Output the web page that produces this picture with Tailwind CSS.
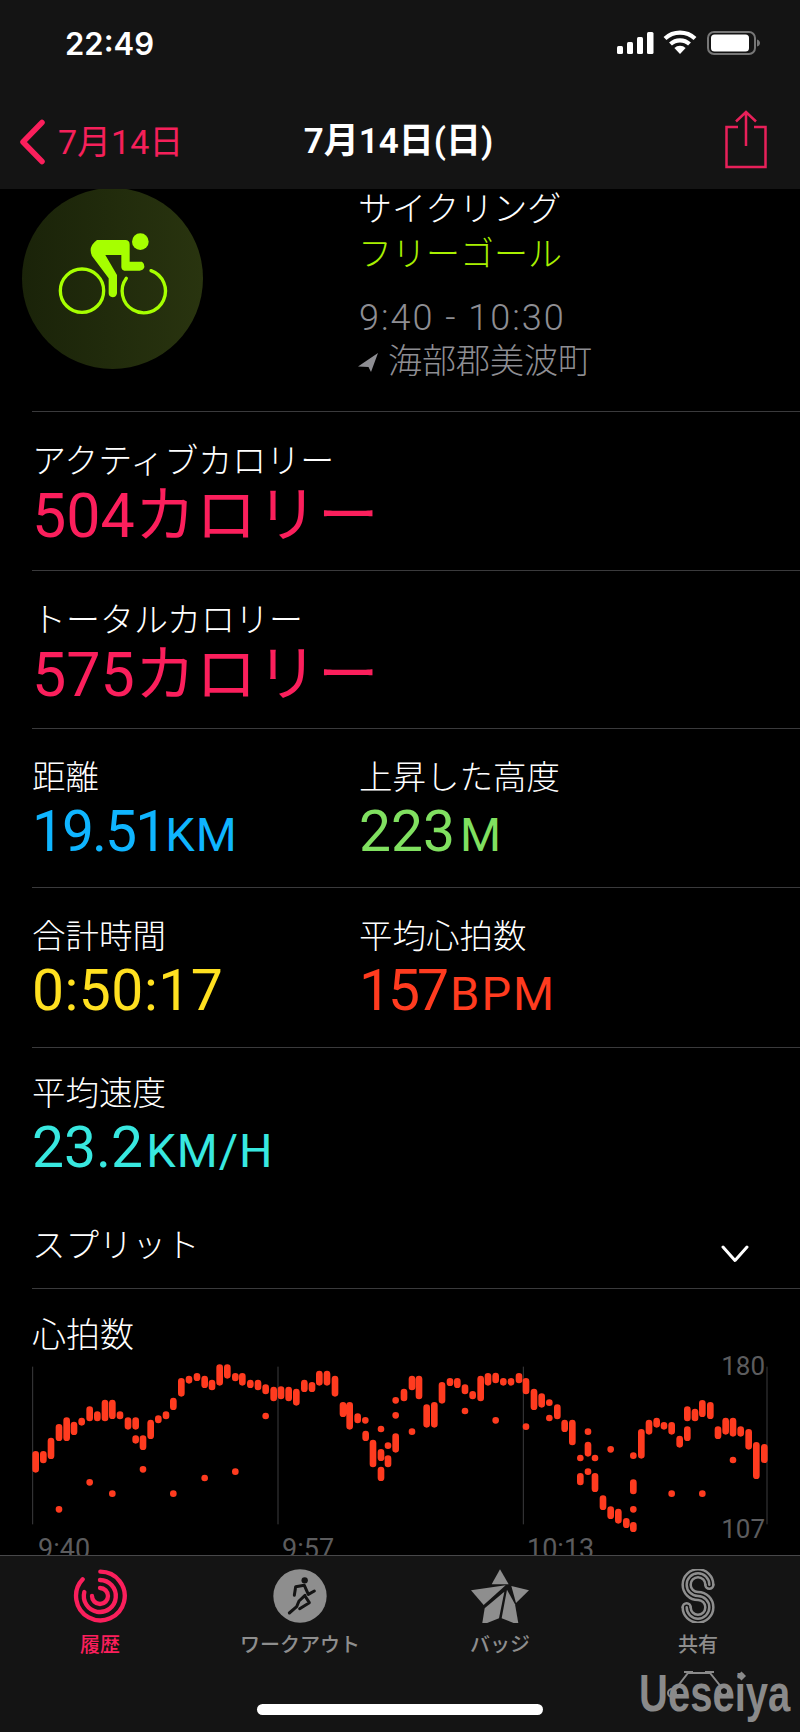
<!DOCTYPE html>
<html lang="ja">
<head>
<meta charset="utf-8">
<script src="https://cdn.jsdelivr.net/npm/@tailwindcss/browser@4"></script>
</head>
<body class="bg-black">
<div class="relative w-[800px] h-[1732px] overflow-hidden flex flex-col bg-black text-white font-['Roboto','Noto_Sans_CJK_JP',sans-serif]">

  <header class="h-[189px] shrink-0 bg-[#141414] flex flex-col">
    <div class="h-[86px] flex items-center justify-between pl-[65px] pr-[40px]">
      <span class="font-['Inter'] font-semibold text-[31px] leading-none">22:49</span>
      <div class="flex items-center">
        <svg width="146" height="30" viewBox="614 28 146 30" fill="none">
          <rect x="617" y="46" width="6" height="8" rx="1.5" fill="#fff"/>
          <rect x="627" y="42" width="6" height="12" rx="1.5" fill="#fff"/>
          <rect x="637" y="37" width="6" height="17" rx="1.5" fill="#fff"/>
          <rect x="647" y="32" width="6.5" height="22" rx="1.5" fill="#fff"/>
          <path d="M665 38.5a22 22 0 0 1 30 0" stroke="#fff" stroke-width="4.2"/>
          <path d="M670.5 44a14 14 0 0 1 19 0" stroke="#fff" stroke-width="4.2"/>
          <path d="M680 54l-5.6-6a8 8 0 0 1 11.2 0z" fill="#fff"/>
          <rect x="708" y="32" width="47" height="22" rx="6" stroke="#777" stroke-width="2"/>
          <rect x="711" y="34.5" width="38" height="17" rx="3.5" fill="#fff"/>
          <path d="M757 39.5c2 .5 3 2 3 3.5s-1 3-3 3.500z" fill="#777"/>
        </svg>
      </div>
    </div>
    <nav class="flex-1 grid grid-cols-[200px_1fr_200px] items-center pt-[8px]">
      <div class="flex items-center pl-[19px] text-[#f5205a]">
        <svg width="28" height="46" viewBox="0 0 28 46" fill="none"><path d="M23 3.500 L4 23 L23 42.500" stroke="#fb1f5c" stroke-width="5.500" stroke-linecap="round" stroke-linejoin="round"/></svg>
        <span class="ml-[11px] text-[34px] leading-none">7月14日</span>
      </div>
      <div class="text-center text-[35px] leading-none font-semibold -ml-[3px]">7月14日(日)</div>
      <div class="flex justify-end pr-[33px] -mt-[3px]">
        <svg width="42" height="60" viewBox="0 0 42 60" fill="none" stroke="#e8205a" stroke-width="2.500">
          <path d="M13 17H1.500V57H40.500V17H29"/>
          <path d="M21 2V36M11 11.500L21 2L31 11.500"/>
        </svg>
      </div>
    </nav>
  </header>

  <main class="flex-1 min-h-0 overflow-hidden">
    <section class="h-[222px] flex items-start pl-[22px]">
      <div class="w-[181px] h-[181px] -mt-[1px] shrink-0 rounded-full bg-gradient-to-r from-[#1a2309] to-[#29340f]">
        <svg width="181" height="181" viewBox="65 24 543 543" fill="none">
          <circle cx="420" cy="185" r="25" fill="#a6ff00"/>
          <path d="M290 180H375Q388 180 388 194V245H425Q433 250 432 262Q428 272 418 272H372Q365 272 363 262V225H315L350 285V340Q348 352 337 352Q325 350 325 340V295L275 228Q262 200 290 180Z" fill="#a6ff00"/>
          <circle cx="245" cy="332" r="65" stroke="#a6ff00" stroke-width="10"/>
          <path d="M378 295A65 65 0 1 0 452 272" stroke="#a6ff00" stroke-width="10" stroke-linecap="round"/>
        </svg>
      </div>
      <div class="ml-[155px] text-[34px] leading-[45px] font-light">
        <div class="-mt-[2px]">サイクリング</div>
        <div class="text-[#a8f000]">フリーゴール</div>
        <div class="mt-[19px] ml-px text-[#8e8e93] text-[36px] tracking-[2px]">9:40 - 10:30</div>
        <div class="flex items-center text-[#8e8e93] -mt-[2px]">
          <svg class="mr-[10px]" width="20" height="20" viewBox="0 0 20 20"><path d="M20 1L0 14.500L10.500 15L13 20Z" fill="#8e8e93"/></svg>
          <span>海部郡美波町</span>
        </div>
      </div>
    </section>

    <div class="ml-[32px] border-t border-[#3a3a3c] h-[159px] pt-[28px]">
      <div class="text-[34px] leading-[42px] font-light">アクティブカロリー</div>
      <div class="text-[61px] leading-[68px] text-[#fb1f5c]">504カロリー</div>
    </div>
    <div class="ml-[32px] border-t border-[#3a3a3c] h-[158px] pt-[28px]">
      <div class="text-[34px] leading-[42px] font-light">トータルカロリー</div>
      <div class="text-[61px] leading-[68px] text-[#fb1f5c]">575カロリー</div>
    </div>
    <div class="ml-[32px] border-t border-[#3a3a3c] h-[159px] pt-[28px] grid grid-cols-[327px_1fr]">
      <div>
        <div class="text-[33.500px] leading-[42px] font-light">距離</div>
        <div class="text-[57px] leading-[66px] text-[#0fb5ff]"><span class="tracking-[-2px]">19.51</span><span class="text-[47px] tracking-[1px]">KM</span></div>
      </div>
      <div>
        <div class="text-[33.500px] leading-[42px] font-light">上昇した高度</div>
        <div class="text-[57px] leading-[66px] text-[#80e060]">223<span class="ml-[5px] text-[47px]">M</span></div>
      </div>
    </div>
    <div class="ml-[32px] border-t border-[#3a3a3c] h-[160px] pt-[28px] grid grid-cols-[327px_1fr]">
      <div>
        <div class="text-[33.500px] leading-[42px] font-light">合計時間</div>
        <div class="text-[57px] leading-[66px] text-[#ffe020] tracking-[0.5px]">0:50:17</div>
      </div>
      <div>
        <div class="text-[33.500px] leading-[42px] font-light">平均心拍数</div>
        <div class="text-[57px] leading-[66px] text-[#ff3b1f]"><span class="tracking-[-3px]">157</span><span class="ml-[4px] text-[47px] tracking-[2px]">BPM</span></div>
      </div>
    </div>
    <div class="ml-[32px] border-t border-[#3a3a3c] h-[241px] pt-[25px]">
      <div class="text-[33.500px] leading-[42px] font-light">平均速度</div>
      <div class="text-[57px] leading-[66px] text-[#38e8e0]">23.2<span class="ml-[3px] text-[47px] tracking-[1px]">KM/H</span></div>
      <div class="mt-[41px] flex items-center justify-between pr-[51px]">
        <span class="text-[33.500px] leading-[42px] font-light">スプリット</span>
        <svg class="mt-[15px]" width="28" height="18" viewBox="0 0 28 18" fill="none"><path d="M2 2L14 15.500L26 2" stroke="#fff" stroke-width="3" stroke-linecap="round" stroke-linejoin="round"/></svg>
      </div>
    </div>

    <section class="relative ml-[32px] border-t border-[#3a3a3c] h-[267px]">
      <div class="absolute left-0 top-[25px] text-[34px] leading-[42px] font-light">心拍数</div>
      <svg class="absolute -left-[32px] top-[21px]" width="800" height="250" viewBox="0 0 2400 750" fill="none">
        <path d="M98 170V643M834 170V643M1570 170V643M2301 170V643" stroke="#3c3c3e" stroke-width="3"/>
        <path stroke="#ff3b1f" stroke-width="20" stroke-linecap="round" d="
        M107 433V478M130 433V450M153 393V437M177 352V383M177 598v.1M200 332V383M222 345V365M245 333V337M269 299V324M269 517v.1M292 314V324M315 279V324M337 279V317M337 551v.1M360 314V318M384 332V349M407 332V349M407 386V391M429 386V410M429 478v.1M452 339V377M475 326V330M498 314V318M520 273V290M520 551v.1M544 214V250M567 207V211M591 199V203M614 207V224M614 504v.1M636 219V231M659 173V217M682 173V196M706 199V204M706 485v.1M727 199V217M751 219V224M774 219V231M797 233V243M797 318v.1M821 240V264M843 239V258M866 240V264M889 246V277M913 219V236M936 226V236M958 192V217M981 192V217M1005 207V250M1029 286V311M1049 286V349M1073 320V330M1096 331v.1M1097 372V383M1119 399V462M1143 357v.1M1143 427V443M1143 480V503M1164 407v.1M1164 446V462M1187 271v.1M1187 316v.1M1187 380V418
        M1212 246V264M1236 207V231M1236 365v.1M1257 207V258M1280 293V343M1303 286V343M1326 226V271M1350 214V218M1372 214V224M1395 233V243M1395 303v.1M1418 253V258M1442 207V264M1464 199V217M1487 198V210M1487 331v.1M1510 214V217M1533 214V217M1557 199V210M1578 214V243M1578 350v.1M1602 246V290M1625 260V283M1648 278v.1M1648 324v.1M1672 293V318M1694 339V356M1717 339V396M1741 444v.1M1741 499V516M1764 365v.1M1764 405V430M1764 485v.1M1785 444v.1M1785 499V536M1809 566V590M1832 599V617M1832 418v.1M1855 606V631M1879 634V644M1900 437v.1M1900 518V543M1900 598v.1M1900 646V656M1924 367V436M1947 339V364M1970 333V343M1992 346V349M2015 346V364M2015 551v.1M2039 387V403M2062 299V324M2062 359V383M2085 306V324M2107 280V311M2107 551v.1M2131 286V317M2154 359V377M2177 333V364M2199 333V370M2199 450v.1M2222 359V370M2246 367V409M2269 406V497M2293 412V449"/>
      </svg>
      <span class="absolute right-[35px] top-[62px] text-[26px] leading-[30px] text-[#5c5c5e]">180</span>
      <span class="absolute right-[35px] top-[225px] text-[26px] leading-[30px] text-[#5c5c5e]">107</span>
      <span class="absolute left-[6px] top-[245px] text-[27px] leading-[30px] text-[#5c5c5e]">9:40</span>
      <span class="absolute left-[250px] top-[245px] text-[27px] leading-[30px] text-[#5c5c5e]">9:57</span>
      <span class="absolute left-[495px] top-[245px] text-[27px] leading-[30px] text-[#5c5c5e]">10:13</span>
    </section>
  </main>

  <footer class="h-[177px] shrink-0 bg-[#141414] border-t border-[#48484a] grid grid-cols-4 items-start pt-[13px] text-[20px] font-medium text-[#8e8e8e]">
    <div class="flex flex-col items-center text-[#fb1f5c]">
      <svg width="54" height="54" viewBox="218 84 162 162" fill="none" stroke="#fb1f5c" stroke-width="13" stroke-linecap="round">
        <path d="M300 92A73 73 0 1 1 247 115"/>
        <path d="M299 117A48 48 0 1 1 252 153"/>
        <path d="M299 141A24 24 0 1 1 275 165"/>
      </svg>
      <span class="mt-[8px] leading-[28px]">履歴</span>
    </div>
    <div class="flex flex-col items-center">
      <svg width="54" height="54" viewBox="819 84 162 162" fill="none">
        <circle cx="900" cy="165" r="80" fill="#8e8e8e"/>
        <circle cx="914" cy="118" r="9.500" fill="#141414"/>
        <path d="M883 163L887 137L913 133L925 160L943 150M915 163L897 180L890 197L868 216M915 165L928 185L899 203" stroke="#141414" stroke-width="9" stroke-linecap="round" stroke-linejoin="round"/>
      </svg>
      <span class="mt-[8px] leading-[28px]">ワークアウト</span>
    </div>
    <div class="flex flex-col items-center">
      <svg width="60" height="54" viewBox="209 84 180 162" fill="#8e8e8e">
        <path d="M299 85L325 130H274Z"/>
        <path d="M333 135L386 148L347 186Z"/>
        <path d="M212 148L316 133L250 192Z"/>
        <path d="M320 146L344 190L355 252L304 232Z"/>
        <path d="M312 152L296 232L245 252L253 202Z"/>
      </svg>
      <span class="mt-[8px] leading-[28px]">バッジ</span>
    </div>
    <div class="flex flex-col items-center -ml-[4px]">
      <svg width="54" height="54" viewBox="816 84 162 162" fill="none" stroke="#8e8e8e" stroke-width="7.500" stroke-linecap="round">
        <path d="M919 131A22 22 0 1 0 897 153A46 46 0 1 1 851 199"/>
        <path d="M931 131A34 34 0 1 0 897 165A34 34 0 1 1 863 199"/>
        <path d="M943 131A46 46 0 1 0 897 177A22 22 0 1 1 875 199"/>
        <path d="M943 131A12 12 0 0 1 919 131M851 199A12 12 0 0 1 875 199"/>
      </svg>
      <span class="mt-[8px] leading-[28px]">共有</span>
    </div>
  </footer>

  <div class="absolute left-[257px] top-[1704px] w-[286px] h-[11px] rounded-full bg-white"></div>
  <div class="absolute left-[639px] top-[1663px] origin-left scale-x-[0.77] text-[52px] leading-[60px] font-bold text-[#8a8a8a] font-['Liberation_Sans',sans-serif]">Ueseiya</div>
  <svg class="absolute left-[660px] top-[1668px]" width="110" height="32" viewBox="0 0 110 32" fill="none" stroke="#8a8a8a" stroke-width="2">
    <path d="M14 23L28 5H50L62 20M24 4H33M45 4H54"/>
    <circle cx="12" cy="25" r="4"/>
    <circle cx="64" cy="23" r="4"/>
    <path d="M77 8L81.500 3.500L86 8L81.500 12.500Z" fill="#8a8a8a" stroke="none"/>
  </svg>
</div>
</body>
</html>
